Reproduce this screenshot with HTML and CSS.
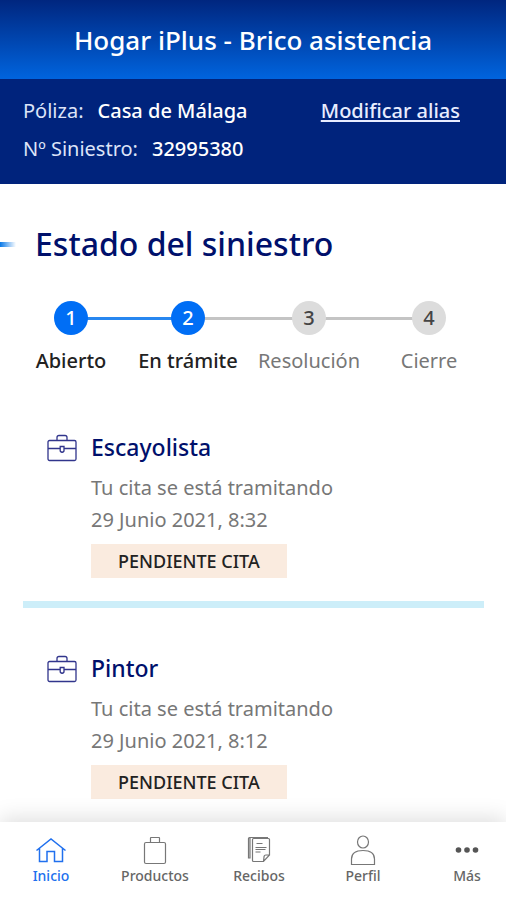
FILE: index.html
```html
<!DOCTYPE html>
<html lang="es">
<head>
<meta charset="utf-8">
<meta name="viewport" content="width=device-width, initial-scale=1">
<title>Hogar iPlus - Brico asistencia</title>
<link rel="stylesheet" href="styles.css">
</head>
<body>
<header class="topbar"><h1>Hogar iPlus - Brico asistencia</h1></header>
<section class="policy">
  <dl class="policy-data">
    <div class="policy-row"><dt>Póliza:</dt><dd>Casa de Málaga</dd></div>
    <div class="policy-row"><dt>Nº Siniestro:</dt><dd>32995380</dd></div>
  </dl>
  <a class="alias-link" href="#alias">Modificar alias</a>
</section>
<main>
  <h2 class="section-title">Estado del siniestro</h2>
  <ol class="steps">
    <li class="step done"><span class="dot">1</span><span class="step-label">Abierto</span></li>
    <li class="step done"><span class="dot">2</span><span class="step-label">En trámite</span></li>
    <li class="step"><span class="dot">3</span><span class="step-label">Resolución</span></li>
    <li class="step"><span class="dot">4</span><span class="step-label">Cierre</span></li>
  </ol>
  <article class="job">
    <svg class="job-icon" viewBox="0 0 30 28" aria-hidden="true"><rect x="1" y="6.5" width="28" height="20" rx="1.5"/><path d="M10 6V3.5Q10 1.5 12 1.5h6q2 0 2 2V6M1 14.5h12M17 14.5h12"/><path d="M13.2 12.5h3.8v4.500q-1.900 2.500-3.800 0z"/></svg>
    <div class="job-body">
      <h3>Escayolista</h3>
      <p>Tu cita se está tramitando</p>
      <p>29 Junio 2021, 8:32</p>
      <span class="badge">PENDIENTE CITA</span>
    </div>
  </article>
  <article class="job">
    <svg class="job-icon" viewBox="0 0 30 28" aria-hidden="true"><rect x="1" y="6.5" width="28" height="20" rx="1.5"/><path d="M10 6V3.5Q10 1.5 12 1.5h6q2 0 2 2V6M1 14.5h12M17 14.5h12"/><path d="M13.2 12.5h3.8v4.500q-1.900 2.500-3.800 0z"/></svg>
    <div class="job-body">
      <h3>Pintor</h3>
      <p>Tu cita se está tramitando</p>
      <p>29 Junio 2021, 8:12</p>
      <span class="badge">PENDIENTE CITA</span>
    </div>
  </article>
</main>
<nav class="tabbar" aria-label="Principal">
  <div class="tabs">
    <a class="tab active" href="#inicio" aria-current="page"><svg viewBox="0 0 32 32" aria-hidden="true"><path d="M1.5 15.5L16 4l14.500 11.500M4.500 13.500V26.500h7.500V16.500h7.500V26.500h8V13.500"/></svg>Inicio</a>
    <a class="tab" href="#productos"><svg viewBox="0 0 32 32" aria-hidden="true"><rect x="5.5" y="7.5" width="21" height="21" rx="1.5"/><path d="M11.500 7.500V3q0-.5.5-.5h8q.5 0 .5.5v4.500"/></svg>Productos</a>
    <a class="tab" href="#recibos"><svg viewBox="0 0 32 32" aria-hidden="true"><path d="M9.500 4.500q0-1 1-1h15q1 0 1 1V20l-6 6.500h-10q-1 0-1-1zM26.500 20h-3.500q-2 0-2 2l-.5 4.500M25 2.500H6.500q-1 0-1 1V23h1.500V3"/><path d="M13.500 8.500h6M12.500 12.500h11M12.500 14.500h10M12.500 17h5"/></svg>Recibos</a>
    <a class="tab" href="#perfil"><svg viewBox="0 0 32 32" aria-hidden="true"><ellipse cx="16" cy="7" rx="5.5" ry="6"/><path d="M4.500 29.500v-5.500q0-8.500 11.500-8.500t11.500 8.500v5.500z"/></svg>Perfil</a>
    <a class="tab" href="#mas"><svg class="dots" viewBox="0 0 32 32" aria-hidden="true"><circle cx="7.5" cy="15" r="2.8"/><circle cx="16" cy="15" r="2.8"/><circle cx="24.5" cy="15" r="2.8"/></svg>Más</a>
  </div>
</nav>
</body>
</html>
```
FILE: styles.css
```css
* { box-sizing: border-box; margin: 0; padding: 0; }
body {
  min-height: 100vh;
  display: flex;
  flex-direction: column;
  background: #fff;
  color: #222;
  font-family: "Noto Sans", "Open Sans", sans-serif;
}
.topbar {
  padding: 24px 16px 23px;
  background: linear-gradient(#00267f, #0064de);
  color: #fff;
  text-align: center;
}
.topbar h1 { font-size: 26px; line-height: 32px; font-weight: 500; }
.policy {
  display: flex;
  justify-content: space-between;
  padding: 13px 46px 16px 23px;
  background: #00237c;
  color: #fff;
  font-size: 20px;
  line-height: 38px;
}
.policy-row { display: flex; gap: 14px; }
.policy-row dt { color: #dde4f8; }
.policy-row dd, .alias-link { font-weight: 500; }
.alias-link {
  color: #e8edff;
  text-decoration-skip-ink: none;
  text-decoration-thickness: 2px;
  text-underline-offset: 2px;
}
main { flex: 1; }
.section-title {
  display: flex;
  align-items: center;
  gap: 19px;
  padding-top: 40px;
  color: #00106b;
  font-size: 32px;
  line-height: 40px;
  font-weight: 500;
}
.section-title::before {
  content: "";
  width: 16px;
  height: 5px;
  background: linear-gradient(90deg, #0878e8, #fff);
}
.steps {
  display: grid;
  grid-template-columns: 118fr 116fr 126fr 114fr;
  padding: 37px 20px 13px 12px;
  list-style: none;
}
.step {
  position: relative;
  display: flex;
  flex-direction: column;
  align-items: center;
  gap: 13px;
  color: #777;
}
.step + .step::before {
  content: "";
  position: absolute;
  top: 16px;
  right: 50%;
  width: 100%;
  height: 3px;
  background: #c4c4c4;
}
.step.done + .step.done::before { background: #2787f0; }
.dot {
  z-index: 1;
  width: 34px;
  height: 34px;
  border-radius: 50%;
  background: #dcdcdc;
  color: #444;
  font-size: 20px;
  line-height: 34px;
  font-weight: 500;
  text-align: center;
}
.step.done { color: #222; }
.done .dot { background: #006ef5; color: #fff; }
.step-label { font-size: 20px; line-height: 26px; white-space: nowrap; }
.done .step-label { font-weight: 500; }
.job {
  display: flex;
  gap: 14px;
  margin: 0 22px 0 23px;
  padding: 44px 24px 23px;
}
.job + .job { border-top: 7px solid #cdeef9; }
.job-icon {
  flex: none;
  width: 30px;
  height: 28px;
  margin-top: 3px;
  fill: none;
  stroke: #31358c;
  stroke-width: 1.3;
}
.job-body h3 { margin-bottom: 9px; color: #00106b; font-size: 23px; line-height: 32px; font-weight: 500; }
.job-body p { color: #777; font-size: 20px; line-height: 32px; }
.badge {
  display: block;
  width: fit-content;
  margin-top: 8px;
  padding: 0 27px;
  background: #faebdf;
  color: #222;
  font-size: 18px;
  line-height: 34px;
  font-weight: 500;
}
.tabbar {
  position: sticky;
  bottom: 0;
  z-index: 2;
  background: #fff;
  box-shadow: 0 -4px 20px rgba(0, 0, 0, 0.13);
  overflow-x: clip;
}
.tabs {
  display: grid;
  grid-template-columns: repeat(5, 1fr);
  margin: 0 -13px 0 -1px;
  padding: 13px 0 15px;
}
.tab {
  display: flex;
  flex-direction: column;
  align-items: center;
  color: #666;
  font-size: 14px;
  line-height: 18px;
  font-weight: 500;
  text-decoration: none;
}
.tab svg { width: 32px; height: 32px; fill: none; stroke: #777; stroke-width: 1.2; }
.tab .dots { fill: #555; stroke: none; }
.tab.active { color: #2070ee; }
.tab.active svg { stroke: #2070ee; stroke-width: 1.5; }
```
